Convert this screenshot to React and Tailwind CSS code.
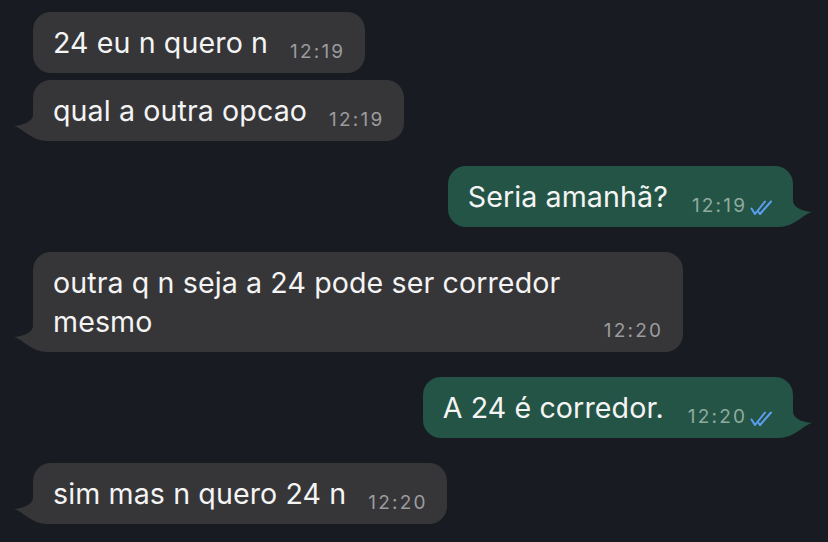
import React from "react";

const messages = [
  { id: 1, out: false, text: "24 eu n quero n", time: "12:19", tail: false },
  { id: 2, out: false, text: "qual a outra opcao", time: "12:19", tail: true },
  { id: 3, out: true, text: "Seria amanhã?", time: "12:19", tail: true },
  { id: 4, out: false, text: "outra q n seja a 24 pode ser corredor mesmo", time: "12:20", tail: true },
  { id: 5, out: true, text: "A 24 é corredor.", time: "12:20", tail: true },
  { id: 6, out: false, text: "sim mas n quero 24 n", time: "12:20", tail: true },
];

function Tail({ out }) {
  // little curled tail at the bottom corner of the last bubble in a group
  return (
    <svg
      width="40"
      height="32"
      viewBox="0 0 40 32"
      className={
        out
          ? "absolute bottom-0 -right-[19px] -scale-x-100 fill-[#245446]"
          : "absolute bottom-0 -left-[19px] fill-[#363638]"
      }
    >
      <path d="M19 0 L19 6 C19 11 12 16 0 17 C9 19 17 32 34 32 L40 32 L40 0 Z" />
    </svg>
  );
}

function DoubleCheck() {
  return (
    <svg width="26" height="16" viewBox="0 0 26 16" fill="none" stroke="#5c9ff5" strokeWidth="2" strokeLinecap="round" strokeLinejoin="round">
      <polyline points="1.5,8.5 5,14 15,1.5" />
      <polyline points="10,14 21,1.5" />
      <line x1="8.5" y1="12" x2="10" y2="14" />
    </svg>
  );
}

function Bubble({ msg }) {
  return (
    <div className={msg.out ? "flex justify-end" : "flex justify-start"}>
      <div
        className={
          msg.out
            ? "relative flex items-end gap-[24px] max-w-[650px] rounded-[18px] bg-[#245446] pl-5 pr-[17px] py-[11px]"
            : "relative flex items-end gap-[22px] max-w-[650px] rounded-[18px] bg-[#363638] pl-5 pr-[22px] py-[11px]"
        }
      >
        {msg.tail && <Tail out={msg.out} />}
        <span className="relative text-[28.6px] tracking-[0.1px] leading-[39px] text-[#f4f4f4]">{msg.text}</span>
        <span className="relative flex items-end gap-[5px] shrink-0 mb-[1px]">
          <span
            className={
              msg.out
                ? "text-[19px] tracking-[2.2px] -mr-[2.2px] leading-[18px] text-[#8fab9f]"
                : "text-[19px] tracking-[2.2px] -mr-[2.2px] leading-[18px] text-[#9c9c9f]"
            }
          >
            {msg.time}
          </span>
          {msg.out && (
            <span className="mb-[-1px]">
              <DoubleCheck />
            </span>
          )}
        </span>
      </div>
    </div>
  );
}

export default function App() {
  return (
    <div
      className="w-[828px] h-[542px] overflow-hidden bg-[#181c22] pl-[33px] pr-[35px] pt-[12px] flex flex-col"
      style={{ fontFamily: "Inter, 'Noto Sans', sans-serif" }}
    >
      {messages.map((m, i) => (
        <div key={m.id} className={i === 0 ? "" : i === 1 ? "mt-[7px]" : "mt-[25px]"}>
          <Bubble msg={m} />
        </div>
      ))}
    </div>
  );
}
